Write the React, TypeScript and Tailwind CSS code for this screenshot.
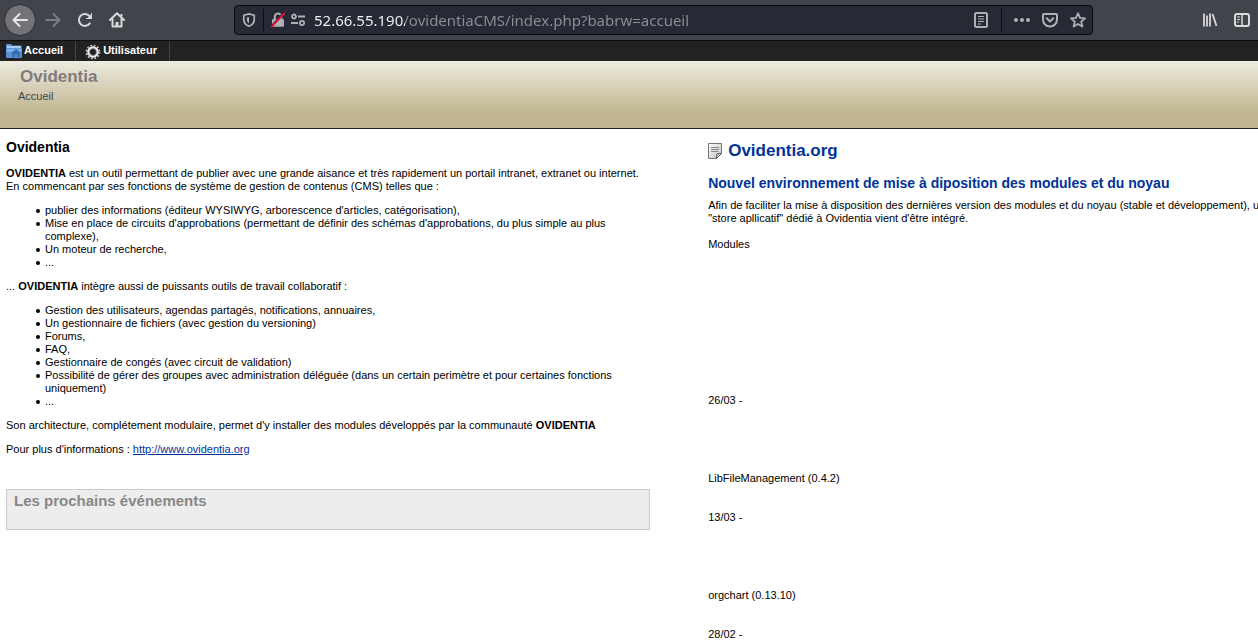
import type { ReactNode } from "react";

function Icon({ children, size = 16, className = "" }: { children: ReactNode; size?: number; className?: string }) {
  return (
    <svg width={size} height={size} viewBox="0 0 16 16" fill="none" stroke="currentColor" strokeWidth="2" strokeLinecap="round" strokeLinejoin="round" className={`block shrink-0 ${className}`} aria-hidden="true">
      {children}
    </svg>
  );
}

function ToolButton({ label, className = "", children }: { label: string; className?: string; children: ReactNode }) {
  return (
    <button type="button" aria-label={label} className={`flex size-8 shrink-0 items-center justify-center ${className}`}>
      {children}
    </button>
  );
}

function BrowserBar() {
  return (
    <div className="flex h-[41px] shrink-0 items-center border-b border-[#0c0c0d] bg-[#42444c] pl-1 pr-0 text-[#d8d8da]">
      <button type="button" aria-label="Page précédente" className="flex size-8 shrink-0 items-center justify-center rounded-full border border-[#2c2d33] bg-[#737378] text-[#e6e6e6]">
        <Icon><path d="M15 8H1.500M7.500 2 1.500 8l6 6" /></Icon>
      </button>
      <ToolButton label="Page suivante" className="ml-px text-[#7c7d83]">
        <Icon><path d="M1 8h13.500M8.500 2l6 6-6 6" /></Icon>
      </ToolButton>
      <ToolButton label="Actualiser">
        <Icon><path d="M12.800 11.400A6 6 0 1 1 12.500 4" /><path d="M15 1.500V7H9.500z" fill="currentColor" stroke="none" /><path d="M14.500 1.500v5h-5" strokeWidth="1" /></Icon>
      </ToolButton>
      <ToolButton label="Accueil du navigateur">
        <Icon><path d="M1 8l7-6.700L15 8M3.500 7v7.500h9V7" /><path d="M8 14v-4" strokeWidth="3" strokeLinecap="butt" /><path d="M12.500 2v2.500" strokeLinecap="butt" /></Icon>
      </ToolButton>

      <div className="ml-[101px] mr-[101px] flex h-[30px] min-w-0 flex-1 items-center rounded-[4px] border border-[#0c0c0d] bg-[#272935] text-[#b0b0b4]">
        <button type="button" aria-label="Protection" className="flex h-full w-7 shrink-0 items-center justify-center">
          <Icon size={14}><path d="M8 1 2 2.600V7c0 4.500 3 7 6 8 3-1 6-3.500 6-8V2.600z" /><path d="M8 4.500 5.500 5.200V7.500c0 2 1 3.500 2.500 4.300z" fill="currentColor" stroke="none" /></Icon>
        </button>
        <div className="h-[22px] w-px shrink-0 bg-[#0c0c0d]" />
        <button type="button" aria-label="Connexion non sécurisée" className="ml-[6px] shrink-0">
          <Icon>
            <path d="M4.800 7V4.800a3.200 3.200 0 0 1 6.400 0V7" />
            <rect x="2" y="7" width="12" height="7.800" rx="1.200" fill="currentColor" stroke="none" />
            <path d="M1.500 13.700 13.200 1" stroke="#272935" strokeWidth="1.200" strokeLinecap="butt" />
            <path d="M1.800 14.700 14.200 1.300" stroke="#f0063c" strokeWidth="1.800" />
          </Icon>
        </button>
        <button type="button" aria-label="Autorisations" className="ml-1 shrink-0">
          <Icon>
            <circle cx="4" cy="4.500" r="2" strokeWidth="1.800" />
            <circle cx="12" cy="11" r="2.100" strokeWidth="1.800" />
            <path d="M8 4.500h7M1 11h7" strokeLinecap="butt" />
          </Icon>
        </button>
        <input
          type="text"
          aria-label="Adresse"
          defaultValue="52.66.55.190/ovidentiaCMS/index.php?babrw=accueil"
          spellCheck={false}
          className="ml-2 h-full min-w-0 flex-1 bg-[linear-gradient(90deg,#f9f9fa_91px,#8d8e96_91px)] bg-clip-text font-['Noto_Sans',sans-serif] text-[15px] text-transparent caret-white outline-none"
        />
        <button type="button" aria-label="Mode lecture" className="shrink-0">
          <Icon><rect x="2" y="1" width="12" height="14" rx="1.500" /><path d="M5 4.500h6M5 7h6M5 9.500h6M5 12h3" strokeWidth="1" strokeLinecap="butt" /></Icon>
        </button>
        <div className="ml-3 h-[22px] w-px shrink-0 bg-[#0c0c0d]" />
        <div className="ml-3 mr-[6px] flex shrink-0 items-center gap-3">
          <button type="button" aria-label="Actions pour la page">
            <Icon><g fill="currentColor" stroke="none"><circle cx="2" cy="8" r="2" /><circle cx="8" cy="8" r="2" /><circle cx="14" cy="8" r="2" /></g></Icon>
          </button>
          <button type="button" aria-label="Enregistrer dans Pocket">
            <Icon><path d="M2 2h12a1 1 0 0 1 1 1v4.500a7 7 0 0 1-14 0V3a1 1 0 0 1 1-1z" /><path d="M4.800 6.300 8 9.500l3.200-3.200" /></Icon>
          </button>
          <button type="button" aria-label="Marquer cette page">
            <Icon><path d="m8 1.300 2 4.600 5 .5-3.800 3.300 1.200 4.900L8 12l-4.400 2.600 1.200-4.900L1 6.400l5-.5z" strokeWidth="1.800" /></Icon>
          </button>
        </div>
      </div>

      <ToolButton label="Bibliothèque">
        <Icon><path d="M2 1.500v13M5 3.500v11M8 1.500v13M10.500 2l4 12" strokeLinecap="butt" strokeWidth="1.800" /></Icon>
      </ToolButton>
      <ToolButton label="Panneaux latéraux">
        <Icon><rect x="1" y="2" width="14" height="12" rx="2" /><path d="M8 2v12" strokeLinecap="butt" strokeWidth="1.500" /><path d="M3 5h3M3 7.500h3M3 10h2" strokeWidth="1" strokeLinecap="butt" /></Icon>
      </ToolButton>
    </div>
  );
}

function HomeFolder() {
  return (
    <svg width="16" height="14" viewBox="0 0 16 14" className="block shrink-0" aria-hidden="true">
      <path d="M0 1q0-1 1-1h4l1 1.500h9.500v4H0z" fill="#5f96d6" />
      <path d="M1 2h14v3H1z" fill="#a8ccf3" />
      <path d="M0 4h16v9q0 1-1 1H1q-1 0-1-1z" fill="#5b91d4" />
      <path d="M1 5h14v3H1z" fill="#7fb0e8" />
      <path d="M10 5 15 9h-1v4h-3v-2.500H9V13H6V9H5z" fill="#356cb4" />
    </svg>
  );
}

function Gear() {
  return (
    <svg width="16" height="16" viewBox="-8 -8 16 16" className="block shrink-0" aria-hidden="true">
      <circle r="6.500" fill="none" stroke="#c9c9d0" strokeWidth="1.800" strokeDasharray="1.700 1.703" />
      <circle r="4.600" fill="none" stroke="#ececef" strokeWidth="2.400" />
      <circle r="3.500" fill="none" stroke="#8a8a95" strokeWidth="0.800" />
    </svg>
  );
}

function NoteIcon() {
  return (
    <svg width="14" height="16" viewBox="0 0 14 16" className="block shrink-0" aria-hidden="true">
      <defs>
        <linearGradient id="note" x1="0" y1="0" x2="1" y2="1">
          <stop offset="0" stopColor="#fff" />
          <stop offset="1" stopColor="#bdbdbd" />
        </linearGradient>
      </defs>
      <path d="M.5.500h13v10l-5 5h-8z" fill="url(#note)" stroke="#777" />
      <path d="M3 4.500h8M3 6.500h8M3 8.500h7" stroke="#888" />
      <path d="M13.500 10.500 8.500 15.500 9 11z" fill="#ddd" stroke="#555" />
    </svg>
  );
}

const publishing = [
  "publier des informations (éditeur WYSIWYG, arborescence d'articles, catégorisation),",
  "Mise en place de circuits d'approbations (permettant de définir des schémas d'approbations, du plus simple au plus complexe),",
  "Un moteur de recherche,",
  "...",
];

const collaboration = [
  "Gestion des utilisateurs, agendas partagés, notifications, annuaires,",
  "Un gestionnaire de fichiers (avec gestion du versioning)",
  "Forums,",
  "FAQ,",
  "Gestionnaire de congés (avec circuit de validation)",
  "Possibilité de gérer des groupes avec administration déléguée (dans un certain perimètre et pour certaines fonctions uniquement)",
  "...",
];

function Bullets({ items }: { items: string[] }) {
  return (
    <ul className="pl-[30px]">
      {items.map((item) => (
        <li key={item} className="flex gap-[5px] before:mt-[5px] before:size-1 before:shrink-0 before:rounded-full before:bg-black before:content-['']">
          {item}
        </li>
      ))}
    </ul>
  );
}

export default function App() {
  return (
    <div className="flex h-screen flex-col overflow-hidden bg-white font-['Liberation_Sans',Arial,sans-serif] text-[11px] leading-[13px] text-black">
      <BrowserBar />

      <nav className="flex h-5 shrink-0 bg-[#222] font-bold text-white">
        <a href="#accueil" className="flex gap-[2px] border-r border-[#444] pl-[6px] pr-3 pt-[3px]">
          <HomeFolder />
          Accueil
        </a>
        <a href="#utilisateur" className="flex gap-[2px] border-r border-[#444] pl-[9px] pr-3 pt-[3px]">
          <Gear />
          Utilisateur
        </a>
      </nav>

      <header className="h-[68px] shrink-0 border-b border-[#222] bg-linear-to-b from-[#eeebe0] to-[#c1b792] to-75% pl-[18px] pt-[6px]">
        <h1 className="pl-[2px] text-[17px] leading-5 font-bold text-[#7d7d7d]">Ovidentia</h1>
        <a href="#accueil" className="mt-[3px] block w-fit text-[#444]">Accueil</a>
      </header>

      <main className="flex min-h-0 flex-1">
        <section className="flex w-[52%] shrink-0 flex-col gap-[11px] pl-[6px] pr-1 pt-[9px]">
          <h2 className="text-[14px] leading-[18px] font-bold">Ovidentia</h2>
          <p>
            <strong>OVIDENTIA</strong> est un outil permettant de publier avec une grande aisance et très rapidement un portail intranet, extranet ou internet.
            <br />
            En commencant par ses fonctions de système de gestion de contenus (CMS) telles que :
          </p>
          <Bullets items={publishing} />
          <p>
            ... <strong>OVIDENTIA</strong> intègre aussi de puissants outils de travail collaboratif :
          </p>
          <Bullets items={collaboration} />
          <p>
            Son architecture, complétement modulaire, permet d'y installer des modules développés par la communauté <strong>OVIDENTIA</strong>
          </p>
          <p>
            Pour plus d'informations :{" "}
            <a href="http://www.ovidentia.org" className="text-[#039] underline">http://www.ovidentia.org</a>
          </p>
          <div className="mt-[22px] h-[41px] border border-[#c8c8c8] bg-[#ededed] pl-[7px] pt-[2px]">
            <h2 className="text-[15px] leading-[18px] font-bold text-[#888]">Les prochains événements</h2>
          </div>
        </section>

        <section className="min-w-0 flex-1 overflow-hidden whitespace-nowrap pl-[54px] pt-[12px]">
          <h2 className="flex items-center gap-[6px] text-[17px] leading-5 font-bold text-[#039]">
            <NoteIcon />
            <a href="#ovidentia-org">Ovidentia.org</a>
          </h2>
          <h3 className="mt-[13px] text-[14px] leading-[18px] font-bold text-[#039]">
            <a href="#modules">Nouvel environnement de mise à diposition des modules et du noyau</a>
          </h3>
          <p className="mt-[7px]">
            Afin de faciliter la mise à disposition des dernières version des modules et du noyau (stable et développement), un
            <br />
            "store apllicatif" dédié à Ovidentia vient d'être intégré.
          </p>
          <p className="mt-[13px]">Modules</p>
          <p className="mt-[143px]">26/03 -</p>
          <p className="mt-[65px]">LibFileManagement (0.4.2)</p>
          <p className="mt-[26px]">13/03 -</p>
          <p className="mt-[65px]">orgchart (0.13.10)</p>
          <p className="mt-[26px]">28/02 -</p>
        </section>
      </main>
    </div>
  );
}
